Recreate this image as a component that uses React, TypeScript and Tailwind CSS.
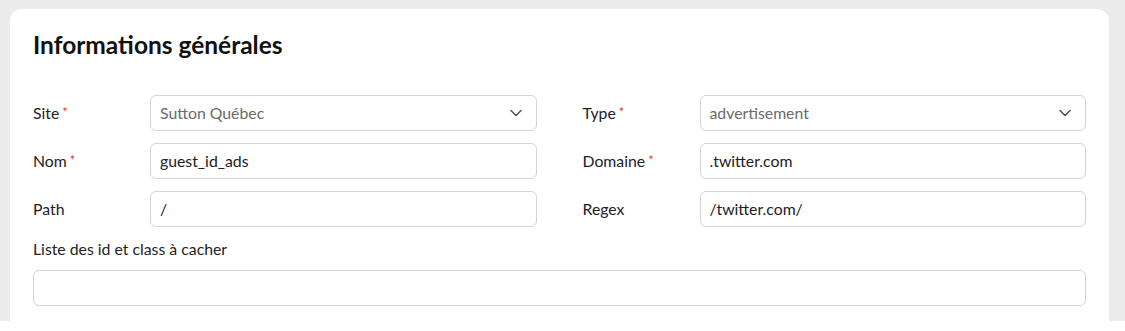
import React from "react";

const Chevron = () => (
  <svg width="14" height="14" viewBox="0 0 14 14" fill="none" className="shrink-0">
    <path d="M2 4.5 L7 9.5 L12 4.5" stroke="#555" strokeWidth="1.6" strokeLinecap="round" strokeLinejoin="round" />
  </svg>
);

const Label = ({ text, required }: { text: string; required?: boolean }) => (
  <div className="w-[117px] shrink-0 text-[15.8px] text-[#222] flex items-start">
    <span>{text}</span>
    {required && <span className="text-[#e53935] text-[13px] ml-[3px] leading-none mt-[5px]">*</span>}
  </div>
);

const Field = ({ label, required, value, select }: { label: string; required?: boolean; value: string; select?: boolean }) => (
  <div className="flex items-center">
    <Label text={label} required={required} />
    <div className="flex-1 h-[36px] border border-[#d4d4d4] rounded-[6px] bg-white flex items-center pl-[9px] pr-[13px]">
      <span className={`flex-1 text-[15.8px] ${select ? "text-[#6a6a6a]" : "text-[#222]"}`}>{value}</span>
      {select && <Chevron />}
    </div>
  </div>
);

export default function App() {
  return (
    <div className="w-[1125px] h-[331px] bg-white" style={{ fontFamily: "Lato, 'Noto Sans', sans-serif" }}>
      <div className="h-[321px] bg-[#ececec] pt-[9px] pl-[10px] pr-[16px] flex flex-col">
        <div className="flex-1 bg-white rounded-t-[12px] px-[23px] pt-[20px]">
          <h2 className="text-[24.5px] font-bold text-[#111] leading-[32px]">Informations générales</h2>
          <div className="grid grid-cols-2 gap-x-[46px] gap-y-[12px] mt-[34px]">
            <Field label="Site" required value="Sutton Québec" select />
            <Field label="Type" required value="advertisement" select />
            <Field label="Nom" required value="guest_id_ads" />
            <Field label="Domaine" required value=".twitter.com" />
            <Field label="Path" value="/" />
            <Field label="Regex" value="/twitter.com/" />
          </div>
          <div className="mt-[11px] text-[15.8px] text-[#222] leading-[22px]">Liste des id et class à cacher</div>
          <div className="mt-[10px] h-[36px] border border-[#d4d4d4] rounded-[6px] bg-white"></div>
        </div>
      </div>
    </div>
  );
}
